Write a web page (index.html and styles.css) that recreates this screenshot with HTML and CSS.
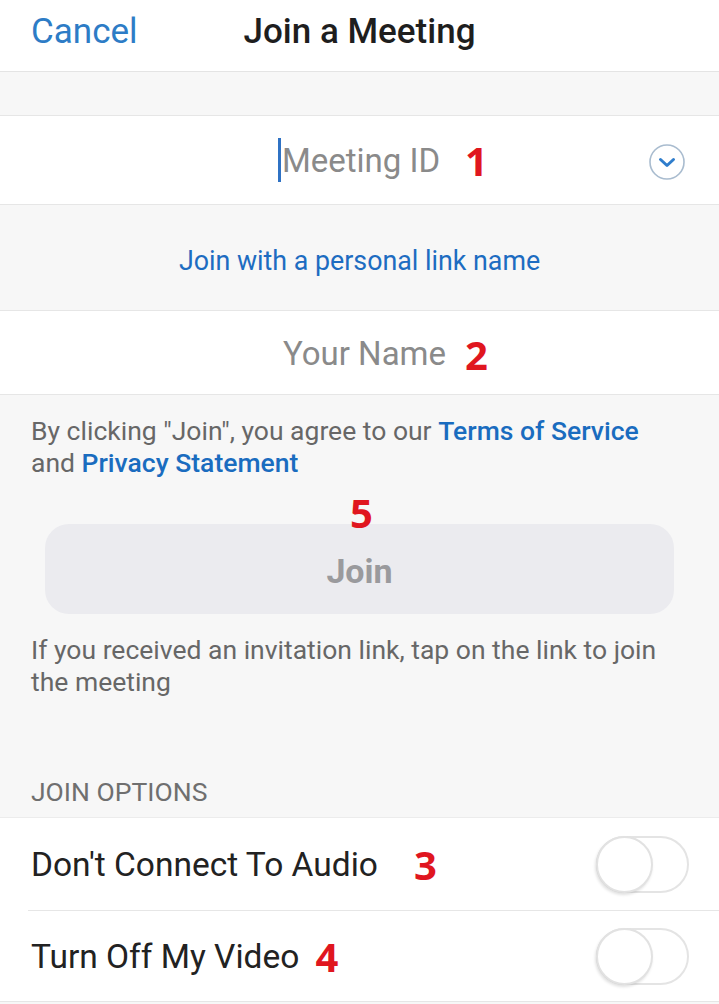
FILE: index.html
```html
<!DOCTYPE html>
<html>
<head>
<meta charset="utf-8">
<link rel="stylesheet" href="styles.css">
</head>
<body>
<div class="screen">
  <header class="topbar">
    <span class="cancel">Cancel</span>
    <span class="title">Join a Meeting</span>
    <span></span>
  </header>
  <div class="gap-top"></div>
  <div class="field field-id">
    <span class="field-text"><span class="caret"></span>Meeting ID<span class="mark mark-1">1</span></span>
    <svg class="dropdown" width="38" height="38" viewBox="0 0 38 38">
      <circle cx="19" cy="19" r="17" fill="none" stroke="#a9bccf" stroke-width="1.6"/>
      <path d="M12.5 16.5 L19 22.5 L25.5 16.5" fill="none" stroke="#2f7dcc" stroke-width="3" stroke-linecap="round" stroke-linejoin="round"/>
    </svg>
  </div>
  <div class="personal-link">Join with a personal link name</div>
  <div class="field field-name">
    <span class="field-text">Your Name<span class="mark mark-2">2</span></span>
  </div>
  <p class="terms">By clicking "Join", you agree to our <span class="link">Terms of Service</span> and <span class="link">Privacy Statement</span></p>
  <div class="mark mark-5">5</div>
  <div class="join-btn">Join</div>
  <p class="hint">If you received an invitation link, tap on the link to join the meeting</p>
  <div class="section-title">JOIN OPTIONS</div>
  <div class="options">
    <div class="option">
      <span class="option-label">Don't Connect To Audio<span class="mark mark-3">3</span></span>
      <span class="toggle"><span class="knob"></span></span>
    </div>
    <div class="option">
      <span class="option-label">Turn Off My Video<span class="mark mark-4">4</span></span>
      <span class="toggle"><span class="knob"></span></span>
    </div>
  </div>
</div>
</body>
</html>
```

FILE: styles.css
```css
* { box-sizing: border-box; }
html, body { margin: 0; padding: 0; }
body {
  background: #f7f7f7;
  font-family: Roboto, "Noto Sans", "Liberation Sans", sans-serif;
  width: 719px;
  height: 1004px;
  overflow: hidden;
}
.screen { display: flex; flex-direction: column; }

.topbar {
  height: 72px;
  background: #fff;
  border-bottom: 1px solid #e4e4e4;
  display: grid;
  grid-template-columns: 1fr auto 1fr;
  align-items: center;
  padding: 0 31px 9px 31px;
}
.cancel { color: #2d7cc6; font-size: 35px; }
.title { color: #1e1e1e; font-size: 35px; font-weight: 500; }

.gap-top { height: 44px; border-bottom: 1px solid #e6e6e6; }

.field {
  background: #fff;
  display: flex;
  align-items: center;
  justify-content: center;
  position: relative;
  border-bottom: 1px solid #e6e6e6;
}
.field-id { height: 89px; }
.field-name { height: 85px; border-top: 1px solid #e6e6e6; padding-top: 2px; padding-left: 10px; }
.field-text { color: #8a8a8a; font-size: 33px; position: relative; }
.field-id .field-text { margin-left: 3px; }
.caret {
  position: absolute;
  left: -4px;
  top: -3px;
  width: 3px;
  height: 44px;
  background: #2f72c4;
}
.dropdown { position: absolute; right: 33px; top: 27px; }

.mark {
  color: #e0161f;
  font-family: "Open Sans", "Liberation Sans", sans-serif;
  font-weight: 700;
  font-size: 40px;
  line-height: 1;
}
.field-text .mark, .option-label .mark {
  position: absolute;
  top: 50%;
  transform: translateY(-50%);
  margin-top: 1px;
}
.mark-1 { left: calc(100% + 25px); }
.mark-2 { left: calc(100% + 19px); }
.mark-3 { left: calc(100% + 36px); }
.mark-4 { left: calc(100% + 16px); }

.personal-link {
  height: 105px;
  display: flex;
  align-items: center;
  justify-content: center;
  color: #1d6cc1;
  font-size: 26.8px;
  padding-top: 7px;
}

.terms {
  margin: 0;
  padding: 20px 40px 0 31px;
  font-size: 26.5px;
  line-height: 32px;
  color: #676767;
}
.link { color: #1a6cbf; font-weight: 500; }

.mark-5 {
  text-align: center;
  margin-top: 14px;
  height: 31px;
  padding-left: 4px;
  position: relative;
  z-index: 1;
}

.join-btn {
  margin: 0 45px;
  height: 90px;
  border-radius: 24px;
  background: #ebebef;
  color: #9a9a9d;
  font-size: 34px;
  font-weight: 700;
  display: flex;
  align-items: center;
  justify-content: center;
  padding-top: 4px;
}

.hint {
  margin: 0;
  padding: 20px 40px 0 31px;
  font-size: 26.5px;
  line-height: 32px;
  color: #676767;
}

.section-title {
  margin-top: 81px;
  padding-left: 31px;
  font-size: 26.5px;
  color: #6f6f6f;
  height: 38px;
  line-height: 26px;
}

.options {
  background: #fff;
  border-top: 1px solid #ececec;
  border-bottom: 1px solid #e6e6e6;
  padding-left: 28px;
}
.option {
  height: 92px;
  display: flex;
  align-items: center;
  padding-left: 3px;
  padding-right: 30px;
}
.option + .option { border-top: 1px solid #e6e6e6; height: 91px; }
.option-label { color: #222; font-size: 33.5px; position: relative; }
.toggle {
  margin-left: auto;
  width: 93px;
  height: 57px;
  border-radius: 29px;
  border: 2px solid #e4e4e4;
  position: relative;
  background: #fff;
}
.knob {
  position: absolute;
  left: -2px;
  top: -2px;
  width: 57px;
  height: 57px;
  border-radius: 50%;
  background: #fff;
  border: 2px solid #e2e2e2;
  box-shadow: -1px 2px 3px rgba(0,0,0,0.12);
}
```
